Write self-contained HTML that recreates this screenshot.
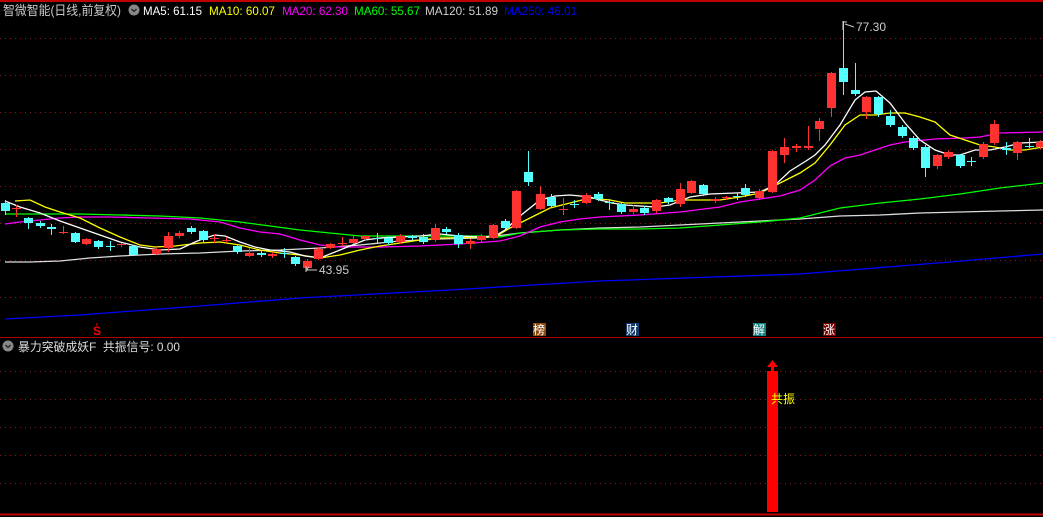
<!DOCTYPE html>
<html><head><meta charset="utf-8"><style>
html,body{margin:0;padding:0;background:#000;width:1043px;height:517px;overflow:hidden}
svg{display:block}
text{font-family:"Liberation Sans","Noto Sans CJK SC",sans-serif}
</style></head><body>
<svg id="s" width="1043" height="517" xmlns="http://www.w3.org/2000/svg">
<rect width="1043" height="517" fill="#000"/>
<line x1="0" y1="1" x2="1043" y2="1" stroke="#c00000" stroke-width="2"/>
<g stroke="#8a1a1a" stroke-width="1" stroke-dasharray="1,4">
<line x1="0" y1="38.5" x2="1043" y2="38.5"/><line x1="0" y1="75.5" x2="1043" y2="75.5"/>
<line x1="0" y1="112.5" x2="1043" y2="112.5"/><line x1="0" y1="149.5" x2="1043" y2="149.5"/>
<line x1="0" y1="186.5" x2="1043" y2="186.5"/><line x1="0" y1="223.5" x2="1043" y2="223.5"/>
<line x1="0" y1="260.5" x2="1043" y2="260.5"/><line x1="0" y1="297.5" x2="1043" y2="297.5"/>
<line x1="0" y1="371.5" x2="1043" y2="371.5"/><line x1="0" y1="399.5" x2="1043" y2="399.5"/>
<line x1="0" y1="427.5" x2="1043" y2="427.5"/><line x1="0" y1="455.5" x2="1043" y2="455.5"/>
<line x1="0" y1="483.5" x2="1043" y2="483.5"/>
</g>
<line x1="0" y1="337.5" x2="1043" y2="337.5" stroke="#b00000" stroke-width="1"/>
<line x1="0" y1="514.5" x2="1043" y2="514.5" stroke="#c00000" stroke-width="2"/>
<g id="ma" fill="none" stroke-width="1.3"></g>
<g id="cd"></g>
<text x="3" y="15" fill="#c8c8c8" font-size="13" textLength="118" lengthAdjust="spacingAndGlyphs">智微智能(日线,前复权)</text>
<circle cx="134" cy="10" r="5.5" fill="#888"/><path d="M131.5 9 L134 11.5 L136.5 9" stroke="#222" stroke-width="1.3" fill="none"/>
<g font-size="12">
<text x="143" y="15" fill="#fff" textLength="59" lengthAdjust="spacingAndGlyphs">MA5: 61.15</text>
<text x="209" y="15" fill="#ff0" textLength="66" lengthAdjust="spacingAndGlyphs">MA10: 60.07</text>
<text x="282" y="15" fill="#f0f" textLength="66" lengthAdjust="spacingAndGlyphs">MA20: 62.30</text>
<text x="354" y="15" fill="#0f0" textLength="66" lengthAdjust="spacingAndGlyphs">MA60: 55.67</text>
<text x="425" y="15" fill="#ccc" textLength="73" lengthAdjust="spacingAndGlyphs">MA120: 51.89</text>
<text x="504" y="15" fill="#00f" textLength="73" lengthAdjust="spacingAndGlyphs">MA250: 46.01</text>
</g>
<text x="856" y="31" fill="#ccc" font-size="12">77.30</text>
<path d="M843 30 V21 M843 22 H847 M845 24 L854 27" stroke="#ccc" fill="none"/>
<text x="319" y="274" fill="#ccc" font-size="12">43.95</text>
<path d="M317 270 H306 M306 270 L309 267 M306 266 V272" stroke="#ccc" fill="none"/>
<text x="93" y="335" fill="#f00" font-size="12" font-weight="bold">S</text>
<line x1="97" y1="323" x2="97" y2="326" stroke="#f00"/>
<rect x="533" y="323" width="13" height="13" fill="#8a4a10"/><text x="533" y="334" fill="#fff" font-size="12">榜</text>
<rect x="626" y="323" width="13" height="13" fill="#123a6a"/><text x="626" y="334" fill="#fff" font-size="12">财</text>
<rect x="753" y="323" width="13" height="13" fill="#118080"/><text x="753" y="334" fill="#fff" font-size="12">解</text>
<rect x="823" y="323" width="13" height="13" fill="#7a0000"/><text x="823" y="334" fill="#fff" font-size="12">涨</text>
<circle cx="8" cy="346" r="5.5" fill="#888"/><path d="M5.5 345 L8 347.5 L10.5 345" stroke="#222" stroke-width="1.3" fill="none"/>
<text x="18" y="351" fill="#ddd" font-size="12" textLength="162" lengthAdjust="spacingAndGlyphs">暴力突破成妖F&#160;&#160;共振信号: 0.00</text>
<rect x="767" y="371" width="11" height="141" fill="#f00"/>
<rect x="771" y="363" width="3" height="8" fill="#f00"/>
<path d="M767 367 L772.5 360 L778 367 Z" fill="#f00"/>
<text x="771" y="403" fill="#ff0" font-size="12">共振</text>
</svg>
<script>
var NS="http://www.w3.org/2000/svg";
function pl(c,p){var e=document.createElementNS(NS,"polyline");e.setAttribute("points",p.map(function(a){return a.join(",")}).join(" "));e.setAttribute("stroke",c);document.getElementById("ma").appendChild(e);}
pl("#00f",[[5,319],[80,315],[200,306],[300,298],[450,290],[600,281],[800,274],[950,262],[1043,254]]);
pl("#ddd",[[5,262],[30,262],[60,261],[90,258],[120,256],[160,254],[200,253],[240,251],[280,250],[320,248],[360,245],[400,241],[440,239],[480,238],[520,233],[560,230],[600,228],[640,227],[680,225],[720,223],[760,221],[800,219],[840,216],[880,215],[920,213],[960,212],[1000,211],[1043,210]]);
pl("#0f0",[[5,214],[40,214],[80,214],[120,215],[160,216],[200,218],[240,222],[270,226],[300,230],[330,233],[360,236],[400,236],[440,236],[480,236],[500,237],[520,233],[560,230],[600,229],[640,229],[680,228],[720,225],[760,222],[800,218],[840,208],[880,203],[920,199],[960,194],[1000,188],[1043,183]]);
pl("#f0f",[[5,224],[20,222],[40,220],[60,218],[80,217],[110,217],[150,218],[190,219],[220,222],[240,228],[260,232],[280,234],[300,240],[320,245],[340,247],[380,247],[420,246],[460,244],[500,241],[520,236],[540,227],[560,222],[580,219],[600,217],[640,215],[680,212],[720,207],[740,202],[760,199],[780,196],[800,190],[815,180],[830,166],[845,158],[860,155],[875,150],[890,145],[905,142],[935,139],[965,138],[980,137],[1000,133],[1043,132]]);
pl("#ff0",[[15,201],[30,200],[45,207],[60,212],[80,218],[100,228],[120,237],[140,245],[155,247],[175,246],[200,243],[220,242],[240,245],[260,250],[280,253],[300,255],[320,258],[340,255],[360,250],[380,246],[400,243],[420,240],[440,238],[495,237],[510,228],[530,218],[550,208],[570,203],[590,198],[610,200],[625,203],[660,203],[680,200],[720,200],[740,197],[760,193],[780,183],[800,173],[815,163],[830,145],[845,125],[860,115],[875,115],[890,113],[905,113],[920,117],[935,122],[950,135],[965,140],[980,145],[995,147],[1010,150],[1025,150],[1043,147]]);
pl("#fff",[[5,201],[20,207],[40,213],[60,221],[80,228],[100,235],[120,242],[140,247],[160,250],[180,249],[195,242],[205,238],[215,235],[225,236],[240,242],[255,247],[270,250],[290,252],[305,256],[320,258],[335,252],[350,246],[365,240],[380,238],[420,236],[440,234],[460,236],[480,237],[495,236],[505,230],[520,216],[540,200],[555,196],[570,195],[590,197],[600,200],[612,203],[625,205],[655,207],[670,205],[690,197],[710,194],[760,192],[775,185],[790,171],[806,161],[815,155],[825,145],[840,125],[855,100],[865,92],[876,91],[890,103],[905,123],[920,140],[935,150],[950,155],[960,155],[975,150],[990,150],[1005,147],[1020,143],[1043,142]]);
var C=[[5,203,211,200,215,'c'],[16,208,209,205,217,'r'],[28,218,223,217,229,'c'],[40,223,226,221,228,'c'],[51,227,229,224,235,'c'],[63,232,233,226,234,'r'],[75,233,242,232,243,'c'],[86,239,244,238,245,'r'],[98,241,247,240,249,'c'],[110,246,246,241,251,'c'],[121,244,245,243,247,'r'],[133,246,255,245,256,'c'],[156,249,254,247,255,'r'],[168,236,248,232,252,'r'],[179,233,236,231,238,'r'],[191,228,232,226,234,'c'],[203,231,240,230,243,'c'],[214,238,239,234,243,'r'],[226,240,241,237,243,'r'],[237,246,252,244,254,'c'],[249,253,256,248,257,'r'],[261,253,255,250,257,'c'],[272,254,256,252,258,'r'],[284,253,253,248,258,'c'],[295,257,264,256,266,'c'],[307,261,268,259,270,'r'],[318,249,259,247,260,'r'],[330,244,248,243,249,'r'],[342,243,243,237,246,'r'],[353,239,243,236,244,'r'],[365,236,239,235,241,'r'],[377,238,238,233,243,'c'],[388,238,243,236,245,'c'],[400,236,242,234,244,'r'],[412,236,238,235,240,'c'],[423,237,242,234,244,'c'],[435,228,240,224,242,'r'],[446,229,232,227,234,'c'],[458,235,244,233,248,'c'],[470,241,244,239,249,'r'],[481,236,240,234,242,'r'],[493,225,238,224,239,'r'],[505,221,228,219,229,'c'],[516,191,228,190,229,'r'],[528,172,182,151,186,'c'],[540,194,209,186,210,'r'],[551,197,206,194,208,'c'],[563,209,210,198,215,'r'],[574,204,204,200,208,'c'],[586,195,203,193,204,'r'],[598,194,199,192,201,'c'],[609,202,202,199,210,'c'],[621,204,212,203,214,'c'],[633,209,212,205,214,'r'],[644,208,213,206,215,'c'],[656,200,211,199,213,'r'],[668,198,202,197,204,'c'],[680,189,204,183,207,'r'],[691,181,193,180,194,'r'],[703,185,194,184,196,'c'],[715,199,201,197,203,'r'],[726,197,198,196,200,'r'],[737,196,197,193,200,'c'],[745,188,195,184,197,'c'],[759,191,198,189,200,'r'],[772,151,192,150,193,'r'],[784,147,155,138,163,'r'],[796,146,148,144,152,'r'],[808,146,148,126,150,'r'],[819,121,129,118,141,'r'],[831,73,108,72,117,'r'],[843,68,82,21,95,'c'],[855,90,94,63,96,'c'],[866,97,112,96,119,'r'],[878,97,114,96,117,'c'],[890,116,125,110,127,'c'],[902,127,136,125,138,'c'],[913,138,148,136,150,'c'],[925,147,168,145,177,'c'],[937,155,166,154,169,'r'],[948,152,157,150,159,'r'],[960,155,166,154,168,'c'],[971,161,161,157,166,'c'],[983,144,157,142,159,'r'],[994,124,143,120,145,'r'],[1006,148,150,142,155,'c'],[1017,142,153,141,160,'r'],[1029,146,146,138,148,'c'],[1040,142,147,140,149,'r']];
var g=document.getElementById("cd");
C.forEach(function(a){var col=a[5]=='r'?'#ff3232':'#54ffff';
var l=document.createElementNS(NS,"line");l.setAttribute("x1",a[0]+.5);l.setAttribute("x2",a[0]+.5);l.setAttribute("y1",a[3]);l.setAttribute("y2",a[4]);l.setAttribute("stroke",col);g.appendChild(l);
var r=document.createElementNS(NS,"rect");r.setAttribute("x",a[0]-4);r.setAttribute("width",9);r.setAttribute("y",a[1]);r.setAttribute("height",Math.max(1,a[2]-a[1]));r.setAttribute("fill",col);g.appendChild(r);});
</script>
</body></html>
